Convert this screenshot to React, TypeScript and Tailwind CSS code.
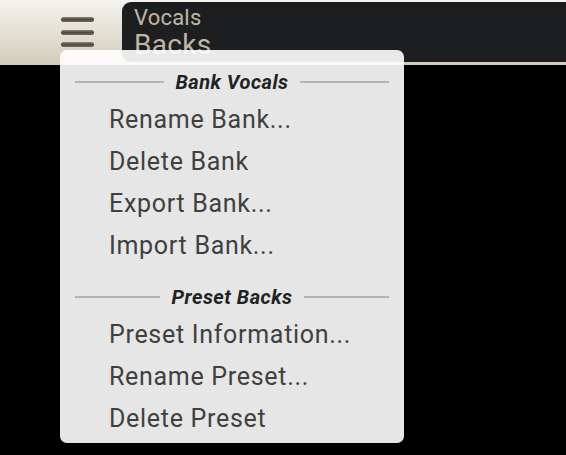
import React from "react";

const font = { fontFamily: "Roboto, 'Liberation Sans', sans-serif" };

const Header = ({ label }: { label: string }) => (
  <div className="flex items-center h-[32px] px-[15px] gap-[11px]">
    <div className="flex-1 h-[2px] bg-[#b5b5b5]" />
    <span className="text-[20px] font-bold italic tracking-[0.5px] text-[#222] leading-none">
      {label}
    </span>
    <div className="flex-1 h-[2px] bg-[#b5b5b5]" />
  </div>
);

const Item = ({ label }: { label: string }) => (
  <div className="flex items-center h-[42px] pl-[49px] text-[25px] tracking-[0.7px] text-[#404040] leading-none cursor-default">
    {label}
  </div>
);

const Bar = () => (
  <div className="w-[33px] h-[5px] rounded-full bg-gradient-to-b from-[#8a8377] via-[#4f4a43] to-[#6e685e]" />
);

export default function App() {
  return (
    <div className="relative w-full h-[455px] bg-black overflow-hidden" style={font}>
      {/* top bar */}
      <div className="flex h-[65px] bg-gradient-to-b from-[#f5f4f0] to-[#d3ccbb]">
        <div className="w-[122px] flex flex-col gap-[7.5px] pt-[17px] pl-[61px]">
          <Bar />
          <Bar />
          <Bar />
        </div>
        <div className="flex-1 mt-[2px] h-[60px] rounded-l-[9px] bg-[#1d1e20] pl-[12px] pt-[5px] overflow-hidden">
          <div className="text-[22px] leading-[22px] tracking-[0.2px] text-[#c0b6a4]">Vocals</div>
          <div className="mt-[2px] text-[28px] leading-[28px] tracking-[0.3px] text-[#c0b6a4]">Backs</div>
        </div>
      </div>

      {/* dropdown menu */}
      <div className="absolute left-[60px] top-[50px] w-[344px] h-[393px] rounded-[7px] bg-white/90 pt-[16px]">
        <Header label="Bank Vocals" />
        <Item label="Rename Bank..." />
        <Item label="Delete Bank" />
        <Item label="Export Bank..." />
        <Item label="Import Bank..." />
        <div className="mt-[15px]">
          <Header label="Preset Backs" />
        </div>
        <Item label="Preset Information..." />
        <Item label="Rename Preset..." />
        <Item label="Delete Preset" />
      </div>
    </div>
  );
}
